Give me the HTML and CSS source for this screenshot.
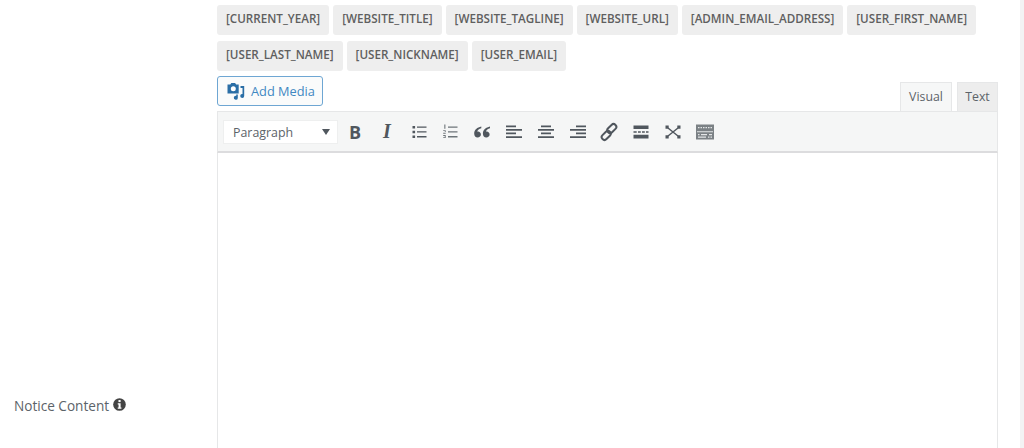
FILE: index.html
```html
<!DOCTYPE html>
<html lang="en">
<head>
    <meta charset="UTF-8">
    <meta name="viewport" content="width=device-width, initial-scale=1.0">
    <title>Notice Content</title>
    <link rel="stylesheet" href="styles.css">
</head>
<body>
    <div class="page">
        <div class="field-row">
            <div class="field-label">
                <span>Notice Content</span>
                <svg class="info-icon" viewBox="0 0 14 14" width="13" height="13">
                    <circle cx="7" cy="7" r="6.8" fill="#444"/>
                    <rect x="5.9" y="2.2" width="2.3" height="2.2" fill="#fff"/>
                    <path d="M5.1 5.6h3.1v4.5h.9v1.4H5.1v-1.400h.9V7h-.9z" fill="#fff"/>
                </svg>
            </div>
            <div class="field-body">
                <div class="tags">
                    <span class="tag">[CURRENT_YEAR]</span>
                    <span class="tag">[WEBSITE_TITLE]</span>
                    <span class="tag">[WEBSITE_TAGLINE]</span>
                    <span class="tag">[WEBSITE_URL]</span>
                    <span class="tag">[ADMIN_EMAIL_ADDRESS]</span>
                    <span class="tag">[USER_FIRST_NAME]</span>
                    <span class="tag">[USER_LAST_NAME]</span>
                    <span class="tag">[USER_NICKNAME]</span>
                    <span class="tag">[USER_EMAIL]</span>
                </div>
                <div class="editor-head">
                    <button class="add-media">
                        <svg viewBox="0 0 20 20" width="20" height="20">
                            <path d="M1.500 3.500h2.800L5.300 2h3.800l1 1.500h2.600v9H1.500z" fill="#2a6ea6"/>
                            <circle cx="7.300" cy="7.800" r="2.500" fill="#fff"/>
                            <path d="M14.500 5h3.700v10a2 2 0 1 1-1.700-2V7h-2z" fill="#2a6ea6"/>
                            <path d="M11.800 13.500v3.400a2 2 0 1 1-1.600-2v-1.400z" fill="#2a6ea6"/>
                        </svg>
                        Add Media
                    </button>
                    <div class="tabs">
                        <span class="tab active">Visual</span>
                        <span class="tab">Text</span>
                    </div>
                </div>
                <div class="toolbar">
                    <div class="format-select">
                        <span>Paragraph</span>
                        <span class="caret"></span>
                    </div>
                    <div class="tools">
                        <span class="tool tool-b">B</span>
                        <span class="tool tool-i">I</span>
                        <span class="tool">
                            <svg viewBox="0 0 20 20"><path d="M3.500 4h2.600v2.400H3.500zM3.500 8.800h2.600v2.400H3.500zM3.500 13.600h2.600V16H3.500zM8 4.500h9.500v1.300H8zM8 9.300h9.500v1.300H8zM8 14.100h9.500v1.300H8z" fill="#50575e"/></svg>
                        </span>
                        <span class="tool">
                            <svg viewBox="0 0 20 20"><path d="M8 4.500h9.500v1.300H8zM8 9.300h9.500v1.300H8zM8 14.100h9.500v1.300H8zM4.300 2.500h1.100v4.200H4.300zM3.200 8.200h2.500v.9H3.200zM3.200 10.800h2.500v.9H3.200zM3.200 13h2.500v.9H3.200zM3.200 15.200h2.500v.9H3.200zM4.800 8.600h.9v1.500h-.9zM4.800 13.400h.9v2.200h-.9z" fill="#6d7479"/></svg>
                        </span>
                        <span class="tool">
                            <svg viewBox="0 0 20 20"><path d="M9.300 4.500C5.300 5.300 2.200 7.800 2.200 11.400c0 2.400 1.400 4 3.400 4s3.300-1.400 3.300-3-1.300-3-2.800-3c-.4 0-.7 0-.9.100.4-1.400 1.900-2.600 4.100-3.200zM18 4.500c-4 .8-7.100 3.300-7.100 6.900 0 2.400 1.400 4 3.400 4s3.300-1.400 3.300-3-1.300-3-2.800-3c-.4 0-.7 0-.9.100.4-1.400 1.900-2.600 4.100-3.200z" fill="#50575e"/></svg>
                        </span>
                        <span class="tool">
                            <svg viewBox="0 0 20 20"><path d="M2 3.500h10v1.700H2zM2 7h16v1.700H2zM2 10.600h10v1.700H2zM2 14.200h16v1.700H2z" fill="#50575e"/></svg>
                        </span>
                        <span class="tool">
                            <svg viewBox="0 0 20 20"><path d="M5 3.500h10v1.700H5zM2 7h16v1.700H2zM5 10.600h10v1.700H5zM2 14.200h16v1.700H2z" fill="#50575e"/></svg>
                        </span>
                        <span class="tool">
                            <svg viewBox="0 0 20 20"><path d="M8 3.500h10v1.700H8zM2 7h16v1.700H2zM8 10.600h10v1.700H8zM2 14.200h16v1.700H2z" fill="#50575e"/></svg>
                        </span>
                        <span class="tool">
                            <svg viewBox="0 0 20 20"><g fill="none" stroke="#50575e" stroke-width="2"><rect x="10" y="1.400" width="5.600" height="10.400" rx="2.800" transform="rotate(45 12.800 6.600)"/><rect x="4.400" y="8.200" width="5.600" height="10.400" rx="2.800" transform="rotate(45 7.200 13.400)"/></g></svg>
                        </span>
                        <span class="tool">
                            <svg viewBox="0 0 20 20"><path d="M2.500 3.500h15V7h-15zM2.500 12.800h15v3.700h-15z" fill="#50575e"/><path d="M2.500 9.300h3.200v1.400H2.500zM7 9.300h2.800v1.400H7zM11 9.300h2.800v1.400H11zM15 9.300h2.500v1.400H15z" fill="#50575e"/></svg>
                        </span>
                        <span class="tool">
                            <svg viewBox="0 0 20 20"><path d="M5 6l10 8M15 6L5 14" stroke="#50575e" stroke-width="1.500"/><path d="M2.500 3.500h3.200v3.200H2.500zM14.300 3.500h3.200v3.200h-3.200zM2.500 13.300h3.200v3.200H2.500zM14.300 13.300h3.200v3.200h-3.200z" fill="#50575e"/></svg>
                        </span>
                        <span class="tool">
                            <svg viewBox="0 0 20 20"><path d="M1 2.500h18v15H1z" fill="#7b8185"/><path d="M3 5h1.500v1.200H3zM5.500 5H7v1.200H5.500zM8 5h1.500v1.200H8zM10.500 5H12v1.200h-1.500zM13 5h1.500v1.200H13zM15.500 5H17v1.200h-1.500zM2 9.200h16v1H2zM3 12h1.500v1.200H3zM6 12h6v1.200H6zM14 12h3v1.200h-3zM3 14.500h8v1.200H3zM13 14.500h1.500v1.200H13zM15.500 14.500H17v1.200h-1.500z" fill="#e4e6e7"/></svg>
                        </span>
                    </div>
                </div>
                <div class="editor-area"></div>
            </div>
        </div>
        <div class="scroll-track"></div>
    </div>
</body>
</html>
```
FILE: styles.css
```css
html, body {
    margin: 0;
    padding: 0;
    height: 100%;
    overflow: hidden;
    background-color: #fff;
}
body {
    font-family: "Open Sans", Arial, sans-serif;
    color: #5c6369;
}
.page {
    display: flex;
    height: 448px;
}
.field-row {
    display: flex;
    flex: 1;
}
.field-label {
    box-sizing: border-box;
    width: 217px;
    flex-shrink: 0;
    align-self: flex-end;
    display: flex;
    align-items: center;
    gap: 4px;
    padding: 0 0 33px 14px;
    font-size: 13.600px;
    line-height: 19px;
}
.info-icon {
    margin-top: -3px;
}
.field-body {
    display: flex;
    flex-direction: column;
    width: 781px;
    padding-top: 5px;
}
.tags {
    display: flex;
    flex-wrap: wrap;
    gap: 6px 4px;
}
.tag {
    height: 30px;
    line-height: 27px;
    padding: 0 9px;
    background-color: #eee;
    border-radius: 3px;
    font-size: 11.650px;
    font-weight: 600;
    color: #5f5f5f;
    white-space: nowrap;
}
.editor-head {
    display: flex;
    justify-content: space-between;
    align-items: flex-end;
    margin-top: 5px;
}
.add-media {
    display: flex;
    align-items: center;
    gap: 5px;
    box-sizing: border-box;
    width: 106px;
    height: 30px;
    margin-bottom: 5px;
    padding: 0 0 0 8px;
    background-color: #fafbfb;
    border: 1px solid #6ea6d3;
    border-radius: 3px;
    color: #3f88c2;
    font-family: inherit;
    font-size: 12.800px;
}
.tabs {
    display: flex;
    gap: 5px;
}
.tab {
    box-sizing: border-box;
    width: 41px;
    height: 29px;
    line-height: 28px;
    text-align: center;
    background-color: #ededed;
    border: 1px solid #e6e7e8;
    border-bottom: none;
    font-size: 12.300px;
}
.tab.active {
    background-color: #f6f7f7;
    width: 52px;
}
.toolbar {
    display: flex;
    align-items: center;
    box-sizing: border-box;
    height: 42px;
    padding: 0 5px;
    background-color: #f5f6f6;
    border: 1px solid #e6e7e8;
    border-bottom: 2px solid #dcdcde;
}
.format-select {
    display: flex;
    justify-content: space-between;
    align-items: center;
    box-sizing: border-box;
    width: 115px;
    height: 24px;
    padding: 1px 7px 0 9px;
    background-color: #fff;
    border: 1px solid #eeefef;
    font-size: 12.400px;
}
.caret {
    width: 0;
    height: 0;
    border-left: 4px solid transparent;
    border-right: 4px solid transparent;
    border-top: 6px solid #50575e;
}
.tools {
    display: flex;
    gap: 11.800px;
    margin-left: 7px;
}
.tool {
    display: flex;
    align-items: center;
    justify-content: center;
    width: 20px;
    height: 20px;
    color: #50575e;
    font-family: "Liberation Serif", serif;
    font-size: 20px;
    font-weight: bold;
}
.tool svg {
    width: 20px;
    height: 20px;
}
.tool-b {
    font-family: "Open Sans", sans-serif;
    font-size: 18px;
}
.tool-i {
    font-style: italic;
}
.editor-area {
    flex: 1;
    border-left: 1px solid #e6e7e8;
    border-right: 1px solid #e6e7e8;
    background-color: #fff;
}
.scroll-track {
    margin-left: auto;
    width: 4px;
    background-color: #f3f3f4;
}
```
